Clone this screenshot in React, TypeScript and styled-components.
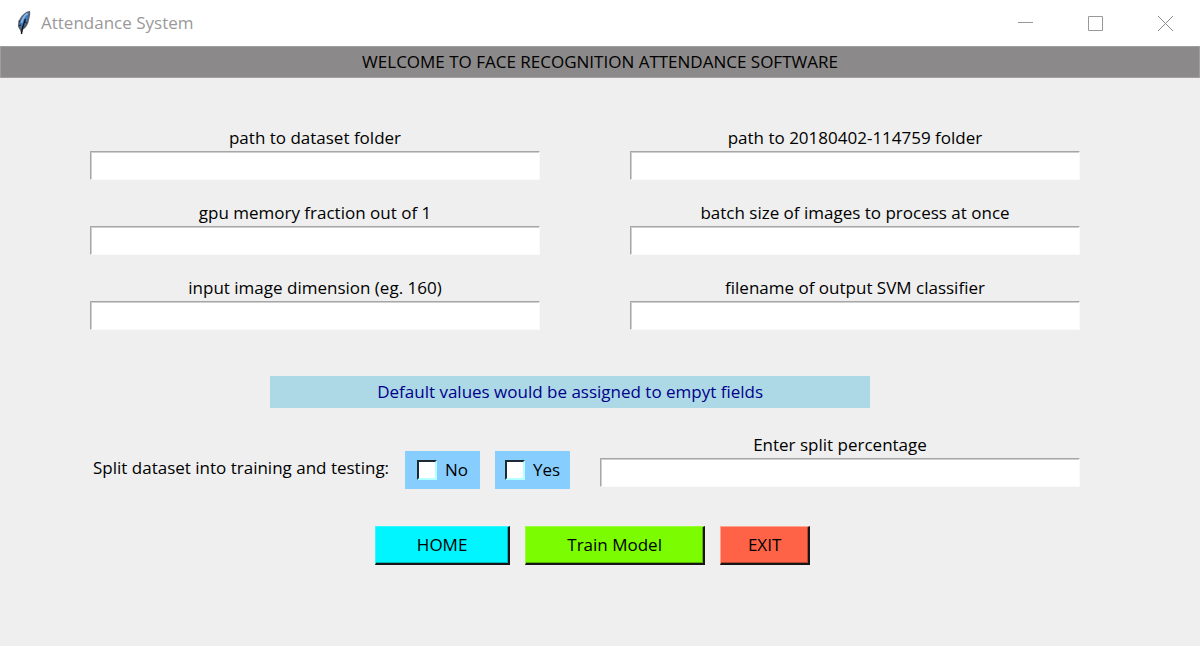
import React from "react";
import styled, { createGlobalStyle } from "styled-components";

const GlobalStyle = createGlobalStyle`
  *, *::before, *::after { box-sizing: border-box; }
  body {
    margin: 0;
    background: #efefef;
    color: #000;
    font-family: "Open Sans", "Noto Sans", sans-serif;
    font-size: 17px;
    line-height: 24px;
  }
  button, input { font: inherit; color: inherit; }
`;

const Window = styled.div`
  min-height: 100vh;
  background: #efefef;
`;

const TitleBar = styled.header`
  display: flex;
  align-items: center;
  height: 46px;
  padding-left: 16px;
  background: #fff;
`;

const WindowTitle = styled.span`
  flex: 1;
  margin-left: 9px;
  font-size: 17px;
  color: #999;
`;

const WindowButton = styled.button`
  display: flex;
  align-items: center;
  justify-content: center;
  width: 70px;
  height: 46px;
  padding: 0;
  border: 0;
  background: transparent;
`;

const Banner = styled.h1`
  margin: 0;
  height: 32px;
  border: 1px solid #a09e9e;
  background: #8b8989;
  font-size: 17px;
  font-weight: 400;
  line-height: 30px;
  text-align: center;
`;

const Form = styled.form`
  padding: 48px 10% 48px 7.5%;
`;

const FieldGrid = styled.div`
  display: grid;
  grid-template-columns: 1fr 1fr;
  column-gap: 9.09%;
  row-gap: 21px;
`;

const Field = styled.div`
  display: flex;
  flex-direction: column;
`;

const FieldLabel = styled.label`
  padding-bottom: 1px;
  text-align: center;
`;

const Entry = styled.input`
  width: 100%;
  height: 29px;
  padding: 0 4px;
  border: 1px solid;
  border-color: #a6a6a6 #fafafa #fafafa #a6a6a6;
  border-radius: 0;
  background: #fff;
  box-shadow: inset 1px 1px 0 #cfcfcf;
  outline: 0;
`;

const Notice = styled.p`
  width: 60.6%;
  margin: 46px 0 0 18.2%;
  background: #add8e6;
  color: #00008b;
  line-height: 32px;
  text-align: center;
`;

const SplitRow = styled.div`
  display: flex;
  align-items: flex-end;
  margin-top: 25px;

  ${Field} {
    flex: 1;
    margin-left: 30px;
    padding-bottom: 2px;
  }
`;

const SplitChoices = styled.fieldset`
  display: flex;
  align-items: center;
  gap: 15px;
  min-width: 0;
  margin: 0;
  padding: 0;
  border: 0;
`;

const SplitCaption = styled.span`
  width: 300px;
  padding: 0 0 4px 3px;
  white-space: nowrap;
`;

const Choice = styled.label`
  display: flex;
  align-items: center;
  justify-content: center;
  gap: 8px;
  width: 75px;
  height: 38px;
  background: #87ceff;
`;

const CheckBox = styled.input`
  appearance: none;
  flex: none;
  width: 20px;
  height: 20px;
  margin: 0;
  border: 2px solid;
  border-color: #1c2a34 #b4ffff #b4ffff #1c2a34;
  background: #fff;
  &:checked { box-shadow: inset 0 0 0 4px #fff; background: #000; }
`;

const Actions = styled.div`
  display: flex;
  gap: 15px;
  margin: 37px 0 0 28.8%;
`;

const ActionButton = styled.button<{ $fill: string; $light: string; $dark: string; $width: number }>`
  width: ${(p) => p.$width}px;
  height: 39px;
  padding: 0;
  border: solid;
  border-width: 1px 2px 2px 1px;
  border-color: ${(p) => p.$light} #161616 #161616 ${(p) => p.$light};
  background: ${(p) => p.$fill};
  box-shadow: inset -1px -1px 0 ${(p) => p.$dark};
`;

const FeatherIcon = () => (
  <svg width="16" height="26" viewBox="0 0 16 26" aria-hidden="true">
    <path d="M14 1 C9 1 4 7 2.4 12 C1.6 15 2 18 4 20 L5.5 24.5 L6.5 20 C10 18 12.500 14 13 10 C13.600 7 14.800 4 14 1Z" fill="#59626b" />
    <path d="M12.700 2.500 C9 3.500 5 8 4 13 L4.300 18 C8 17 10.500 13 11.500 9 C12 6 13 4.500 12.700 2.500Z" fill="#3f78bd" />
    <path d="M11.500 3.500 C8.500 5.500 6.500 9 5.500 13" stroke="#82b4ea" strokeWidth="2" fill="none" />
    <path d="M9.500 9 C8 13 6 17 5.500 24" stroke="#11161c" strokeWidth="1.400" fill="none" />
    <path d="M2.500 11 L4 12 M2.500 16 L5 15 M8 17 L7 15 M11 13 L9 12" stroke="#17212c" strokeWidth="1" />
  </svg>
);

const fields = [
  { id: "dataset", label: "path to dataset folder" },
  { id: "model", label: "path to 20180402-114759 folder" },
  { id: "gpu", label: "gpu memory fraction out of 1" },
  { id: "batch", label: "batch size of images to process at once" },
  { id: "dimension", label: "input image dimension (eg. 160)" },
  { id: "classifier", label: "filename of output SVM classifier" },
];

const LabeledEntry = ({ id, label }: { id: string; label: string }) => (
  <Field>
    <FieldLabel htmlFor={id}>{label}</FieldLabel>
    <Entry id={id} type="text" />
  </Field>
);

export default function App() {
  return (
    <Window>
      <GlobalStyle />
      <TitleBar>
        <FeatherIcon />
        <WindowTitle>Attendance System</WindowTitle>
        <WindowButton type="button" aria-label="Minimize">
          <svg width="15" height="15" viewBox="0 0 15 15"><path d="M0 6.500H15" stroke="#999" /></svg>
        </WindowButton>
        <WindowButton type="button" aria-label="Maximize">
          <svg width="15" height="15" viewBox="0 0 15 15"><path d="M.5.5H14.500V14.500H.5Z" fill="none" stroke="#999" /></svg>
        </WindowButton>
        <WindowButton type="button" aria-label="Close">
          <svg width="15" height="15" viewBox="0 0 15 15"><path d="M0 0L15 15M15 0L0 15" stroke="#8c8c8c" /></svg>
        </WindowButton>
      </TitleBar>
      <Banner>WELCOME TO FACE RECOGNITION ATTENDANCE SOFTWARE</Banner>
      <Form onSubmit={(e) => e.preventDefault()}>
        <FieldGrid>
          {fields.map((f) => (
            <LabeledEntry key={f.id} {...f} />
          ))}
        </FieldGrid>
        <Notice>Default values would be assigned to empyt fields</Notice>
        <SplitRow>
          <SplitChoices aria-labelledby="split-caption">
            <SplitCaption id="split-caption">Split dataset into training and testing:</SplitCaption>
            <Choice><CheckBox type="checkbox" />No</Choice>
            <Choice><CheckBox type="checkbox" />Yes</Choice>
          </SplitChoices>
          <LabeledEntry id="percentage" label="Enter split percentage" />
        </SplitRow>
        <Actions>
          <ActionButton type="button" $fill="#00f5ff" $light="#35f8ff" $dark="#00b4bb" $width={135}>HOME</ActionButton>
          <ActionButton type="submit" $fill="#7cfc00" $light="#98fd35" $dark="#58b400" $width={180}>Train Model</ActionButton>
          <ActionButton type="button" $fill="#ff6347" $light="#ffa38f" $dark="#b44632" $width={90}>EXIT</ActionButton>
        </Actions>
      </Form>
    </Window>
  );
}
